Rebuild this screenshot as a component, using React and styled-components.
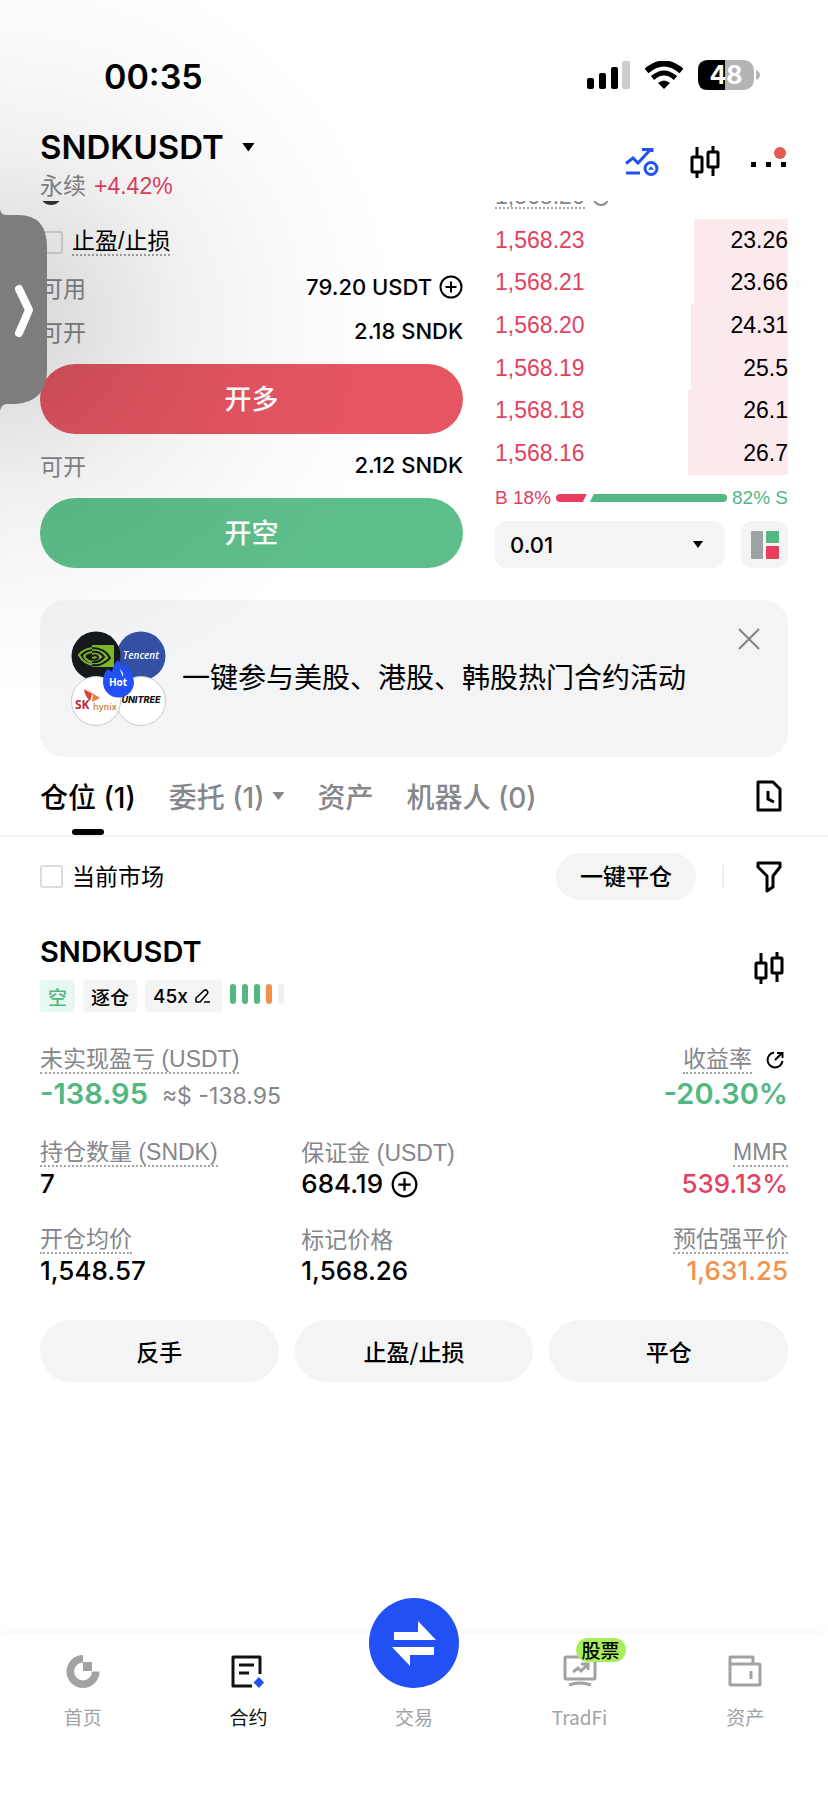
import { useState } from "react";
import styled, { createGlobalStyle } from "styled-components";

const asks = [
    { price: "1,568.23", size: "23.26", depth: 32 },
    { price: "1,568.21", size: "23.66", depth: 32 },
    { price: "1,568.20", size: "24.31", depth: 33 },
    { price: "1,568.19", size: "25.5", depth: 33 },
    { price: "1,568.18", size: "26.1", depth: 34 },
    { price: "1,568.16", size: "26.7", depth: 34 },
];

const riskBars = ["#52b781", "#52b781", "#52b781", "#f0924c", "#f0f0f0"];

export default function App() {
    const [tpsl, setTpsl] = useState(false);
    const [onlyCurrent, setOnlyCurrent] = useState(false);
    const [banner, setBanner] = useState(true);

    return (
        <>
            <GlobalStyle />
            <Page>
                <StatusBar>
                    <Clock>00:35</Clock>
                    <StatusIcons>
                        <SignalIcon />
                        <WifiIcon />
                        <BatteryIcon />
                    </StatusIcons>
                </StatusBar>

                <Header>
                    <div>
                        <PairButton>
                            SNDKUSDT <Caret $size={13} />
                        </PairButton>
                        <PairInfo>
                            永续 <Change>+4.42%</Change>
                        </PairInfo>
                    </div>
                    <HeaderIcons>
                        <IconButton aria-label="网格"><TrendIcon /></IconButton>
                        <IconButton aria-label="K线"><CandleIcon /></IconButton>
                        <IconButton aria-label="更多"><MoreIcon /></IconButton>
                    </HeaderIcons>
                </Header>

                <TradePanel>
                    <OrderForm>
                        <CutRow>
                            <Thumb />
                        </CutRow>
                        <CheckLabel>
                            <Checkbox type="checkbox" checked={tpsl} onChange={() => setTpsl(!tpsl)} />
                            <Dotted>止盈/止损</Dotted>
                        </CheckLabel>
                        <FormRow>
                            <span>可用</span>
                            <Amount>79.20 USDT <PlusIcon size={24} /></Amount>
                        </FormRow>
                        <FormRow>
                            <span>可开</span>
                            <Amount>2.18 SNDK</Amount>
                        </FormRow>
                        <TradeButton $color="#e65562">开多</TradeButton>
                        <FormRow>
                            <span>可开</span>
                            <Amount>2.12 SNDK</Amount>
                        </FormRow>
                        <TradeButton $color="#5ebe8b">开空</TradeButton>
                    </OrderForm>

                    <OrderBook>
                        <CutRow>
                            <MarkPrice>1,568.26</MarkPrice>
                            <Ring />
                        </CutRow>
                        <BookTable>
                            <tbody>
                                {asks.map(ask => (
                                    <BookRow key={ask.price} $depth={ask.depth}>
                                        <PriceCell>{ask.price}</PriceCell>
                                        <SizeCell>{ask.size}</SizeCell>
                                    </BookRow>
                                ))}
                            </tbody>
                        </BookTable>
                        <Ratio>
                            <RatioText $color="#e4405f">B 18%</RatioText>
                            <RatioBars>
                                <BuyBar />
                                <SellBar />
                            </RatioBars>
                            <RatioText $color="#52b781">82% S</RatioText>
                        </Ratio>
                        <BookControls>
                            <SelectBox>
                                <StepSelect aria-label="精度" defaultValue="0.01">
                                    <option>0.01</option>
                                    <option>0.1</option>
                                </StepSelect>
                                <Caret $size={10} />
                            </SelectBox>
                            <LayoutButton aria-label="布局"><LayoutIcon /></LayoutButton>
                        </BookControls>
                    </OrderBook>
                </TradePanel>

                {banner && (
                    <Banner>
                        <BrandLogos />
                        <BannerText>一键参与美股、港股、韩股热门合约活动</BannerText>
                        <CloseButton aria-label="关闭" onClick={() => setBanner(false)}>
                            <svg width="22" height="22" viewBox="0 0 22 22" stroke="#808285" strokeWidth="2">
                                <path d="M1 1l20 20M21 1L1 21" />
                            </svg>
                        </CloseButton>
                    </Banner>
                )}

                <Tabs>
                    <Tab $active>仓位 (1)</Tab>
                    <Tab>委托 (1) <Caret $size={12} /></Tab>
                    <Tab>资产</Tab>
                    <Tab>机器人 (0)</Tab>
                    <HistoryButton aria-label="历史"><HistoryIcon /></HistoryButton>
                </Tabs>

                <FilterRow>
                    <CheckLabel>
                        <Checkbox type="checkbox" checked={onlyCurrent} onChange={() => setOnlyCurrent(!onlyCurrent)} />
                        <span>当前市场</span>
                    </CheckLabel>
                    <FilterActions>
                        <ClosePill>一键平仓</ClosePill>
                        <Divider />
                        <IconButton aria-label="筛选"><FunnelIcon /></IconButton>
                    </FilterActions>
                </FilterRow>

                <Position>
                    <PositionHead>
                        <div>
                            <PositionTitle>SNDKUSDT</PositionTitle>
                            <Tags>
                                <Tag $side>空</Tag>
                                <Tag>逐仓</Tag>
                                <Tag>45x <PencilIcon /></Tag>
                                <RiskMeter>
                                    {riskBars.map((color, i) => <RiskBar key={i} $color={color} />)}
                                </RiskMeter>
                            </Tags>
                        </div>
                        <IconButton aria-label="K线"><CandleIcon /></IconButton>
                    </PositionHead>

                    <Stats>
                        <Stat $wide>
                            <StatLabel><Dotted>未实现盈亏 (USDT)</Dotted></StatLabel>
                            <StatValue $big $color="#52b781">-138.95 <Approx>≈$ -138.95</Approx></StatValue>
                        </Stat>
                        <Stat $right>
                            <StatLabel><Dotted>收益率</Dotted><ShareIcon /></StatLabel>
                            <StatValue $big $color="#52b781">-20.30%</StatValue>
                        </Stat>
                        <Stat>
                            <StatLabel><Dotted>持仓数量 (SNDK)</Dotted></StatLabel>
                            <StatValue>7</StatValue>
                        </Stat>
                        <Stat>
                            <StatLabel>保证金 (USDT)</StatLabel>
                            <StatValue>684.19 <PlusIcon size={27} /></StatValue>
                        </Stat>
                        <Stat $right>
                            <StatLabel><Dotted>MMR</Dotted></StatLabel>
                            <StatValue $color="#e4405f">539.13%</StatValue>
                        </Stat>
                        <Stat>
                            <StatLabel><Dotted>开仓均价</Dotted></StatLabel>
                            <StatValue>1,548.57</StatValue>
                        </Stat>
                        <Stat>
                            <StatLabel>标记价格</StatLabel>
                            <StatValue>1,568.26</StatValue>
                        </Stat>
                        <Stat $right>
                            <StatLabel><Dotted>预估强平价</Dotted></StatLabel>
                            <StatValue $color="#f0924c">1,631.25</StatValue>
                        </Stat>
                    </Stats>

                    <Actions>
                        <ActionButton>反手</ActionButton>
                        <ActionButton>止盈/止损</ActionButton>
                        <ActionButton>平仓</ActionButton>
                    </Actions>
                </Position>

                <BottomNav>
                    <NavItem href="#home"><HomeIcon />首页</NavItem>
                    <NavItem href="#futures" $active><FuturesIcon />合约</NavItem>
                    <NavItem href="#trade"><TradeCircle><SwapIcon /></TradeCircle>交易</NavItem>
                    <NavItem href="#tradfi">
                        <BadgeWrap><TradFiIcon /><Badge>股票</Badge></BadgeWrap>
                        TradFi
                    </NavItem>
                    <NavItem href="#assets"><WalletIcon />资产</NavItem>
                </BottomNav>

                <EdgeShade />
                <EdgeHandle aria-label="展开">
                    <svg width="48" height="202" viewBox="0 0 48 202">
                        <path d="M0 0Q1 6 6 6H18Q47 6 47 38V162Q47 192 16 195H6Q1 196 0 202Z" fill="#7f7c7d" />
                        <path d="M19 80L29 101L19 124" fill="none" stroke="#fff" strokeWidth="8" strokeLinecap="round" strokeLinejoin="round" />
                    </svg>
                </EdgeHandle>
            </Page>
        </>
    );
}

function SignalIcon() {
    return (
        <svg width="43" height="28" viewBox="0 0 43 28">
            <rect x="0" y="17" width="7" height="11" rx="2" />
            <rect x="12" y="12" width="7" height="16" rx="2" />
            <rect x="24" y="6" width="7" height="22" rx="2" />
            <rect x="35" y="0" width="8" height="28" rx="2" fill="#ccc" />
        </svg>
    );
}

function WifiIcon() {
    return (
        <svg width="38" height="28" viewBox="0 0 38 28">
            <path d="M1.500 10Q19 -5 36.500 10" fill="none" stroke="#000" strokeWidth="6" />
            <path d="M7.500 17Q19 7 30.500 17" fill="none" stroke="#000" strokeWidth="5" />
            <path d="M13 22Q19 17 25 22L19 28Z" />
        </svg>
    );
}

function BatteryIcon() {
    return (
        <svg width="62" height="30" viewBox="0 0 62 30">
            <rect width="56" height="30" rx="10" fill="#b4b4b4" />
            <path d="M10 0H27V30H10Q0 30 0 20V10Q0 0 10 0Z" />
            <path d="M58 10Q62 12 62 15T58 20Z" fill="#b4b4b4" />
            <text x="28" y="24" textAnchor="middle" fill="#fff" fontFamily="Inter" fontWeight="700" fontSize="25">48</text>
        </svg>
    );
}

function TrendIcon() {
    return (
        <svg width="34" height="30" viewBox="0 0 34 30" fill="none" stroke="#2151f5" strokeWidth="3">
            <path d="M1 16.500L8 11L13 16L25 3" />
            <path d="M17 2.500H27V5" />
            <path d="M1 26H15" />
            <circle cx="26" cy="21.500" r="6" />
            <path d="M26 19.500l2.500 3h-5z" fill="#2151f5" strokeWidth="0.500" />
        </svg>
    );
}

function CandleIcon() {
    return (
        <svg width="30" height="34" viewBox="0 0 30 34" fill="none" stroke="#000" strokeWidth="3">
            <path d="M7 2V12M7 28V33M23 1V7M23 22V31" />
            <rect x="2" y="12" width="10" height="15" rx="1" />
            <rect x="18" y="7" width="10" height="15" rx="1" />
        </svg>
    );
}

function MoreIcon() {
    return (
        <svg width="37" height="30" viewBox="0 0 37 30">
            <path d="M0 15h5v5h-5zM15 15h5v5h-5zM30 15h5v5h-5z" />
            <circle cx="29" cy="6" r="6" fill="#e25a50" />
        </svg>
    );
}

function PlusIcon({ size }) {
    return (
        <svg width={size} height={size} viewBox="0 0 24 24" fill="none" stroke="#000" strokeWidth="2">
            <circle cx="12" cy="12" r="10.500" />
            <path d="M12 6.500v11M6.500 12h11" />
        </svg>
    );
}

function LayoutIcon() {
    return (
        <svg width="28" height="28" viewBox="0 0 28 28">
            <rect width="12" height="28" rx="1" fill="#9da2a5" />
            <rect x="15" width="13" height="12" rx="1" fill="#52b781" />
            <rect x="15" y="15" width="13" height="13" rx="1" fill="#ea3d5e" />
        </svg>
    );
}

function BrandLogos() {
    return (
        <svg width="95" height="95" viewBox="0 0 95 95">
            <circle cx="70" cy="25" r="24.500" fill="#3450a5" />
            <text x="70" y="28" textAnchor="middle" fill="#fff" fontFamily="Open Sans" fontStyle="italic" fontWeight="600" fontSize="10">Tencent</text>
            <circle cx="70" cy="70" r="24.500" fill="#fff" stroke="#c9c9cd" />
            <text x="70" y="72" textAnchor="middle" fill="#111" fontFamily="Inter" fontStyle="italic" fontWeight="800" fontSize="9">UNITREE</text>
            <circle cx="25" cy="25" r="24.500" fill="#15181c" />
            <path d="M21 14h22v22H21z" fill="#7db928" />
            <path d="M21 17Q11 19 8 24Q13 34 25 34" fill="none" stroke="#7db928" strokeWidth="2" />
            <path d="M21 17Q34 17 39 27Q30 36 21 34" fill="none" stroke="#15181c" strokeWidth="2" />
            <path d="M21 21Q15 22 13 25Q16 31 22 31" fill="none" stroke="#7db928" strokeWidth="2" />
            <path d="M21 21Q29 20 33 26Q28 32 21 31M21 25Q27 23 27 27Q24 30 21 28" fill="none" stroke="#15181c" strokeWidth="2" />
            <circle cx="25" cy="70" r="24.500" fill="#fff" stroke="#c9c9cd" />
            <path d="M13 58L21 63L19 70Q14 66 13 58Z" fill="#d8452f" />
            <path d="M15 58L29 67L21 71L22 64Z" fill="#ee7b3c" />
            <text x="4" y="78" fill="#c5243c" fontFamily="Open Sans" fontWeight="700" fontSize="12">SK</text>
            <text x="22" y="79" fill="#c98534" fontFamily="Open Sans" fontWeight="600" fontSize="9">hynix</text>
            <path d="M47 29Q51 33 51 38Q54 35 55 32Q62 42 63 51A15.500 15.500 0 0 1 32 51Q32 42 37 38L41 41Q42 34 47 29Z" fill="#2151f5" />
            <path d="M49 38Q53 42 52 46Q50 42 49 38Z" fill="#fff" />
            <text x="47" y="55" textAnchor="middle" fill="#fff" fontFamily="Open Sans" fontWeight="700" fontSize="10">Hot</text>
        </svg>
    );
}

function HistoryIcon() {
    return (
        <svg width="26" height="32" viewBox="0 0 26 32" fill="none" stroke="#000" strokeWidth="3">
            <path d="M2 2H17L24 9V30H2Z" strokeLinejoin="round" />
            <path d="M12 11V19L18 22" />
        </svg>
    );
}

function FunnelIcon() {
    return (
        <svg width="26" height="32" viewBox="0 0 26 32" fill="none" stroke="#000" strokeWidth="3" strokeLinejoin="round">
            <path d="M2 2H24V6L17 15V26L11 30V15L2 6Z" />
        </svg>
    );
}

function PencilIcon() {
    return (
        <svg width="16" height="16" viewBox="0 0 16 16" fill="none" stroke="#000" strokeWidth="1.500" strokeLinejoin="round">
            <path d="M1 14V10L9 2.500Q10.500 1.200 12 2.500Q13.500 4 12.500 5.500L5 14Z" />
            <path d="M9 14H15" />
        </svg>
    );
}

function ShareIcon() {
    return (
        <svg width="18" height="18" viewBox="0 0 18 18" fill="none" stroke="#000" strokeWidth="2">
            <path d="M8 1.500A7.500 7.500 0 1 0 16.500 10" />
            <path d="M9 9L16 2M11 2H16.500V7" />
        </svg>
    );
}

function HomeIcon() {
    return (
        <svg width="34" height="34" viewBox="0 0 34 34" fill="#a0a2a4">
            <path d="M17 1A16.500 16.500 0 1 0 33.500 17.500H26A9 9 0 1 1 17 8.500Z" />
            <rect x="17" y="8" width="9" height="9" />
        </svg>
    );
}

function FuturesIcon() {
    return (
        <svg width="34" height="34" viewBox="0 0 34 34" fill="none" stroke="#111" strokeWidth="3">
            <path d="M29 20V3H2V32H21" strokeLinejoin="round" />
            <path d="M8 11H23M8 19H18" />
            <path d="M28 23L33 28.500L28 34L22.500 28.500Z" fill="#2151f5" stroke="none" />
        </svg>
    );
}

function SwapIcon() {
    return (
        <svg width="46" height="46" viewBox="0 0 46 46" fill="#fff">
            <path d="M3 12H27V1L45 20H3Z" />
            <path d="M43 35V27H1L19 46V35Z" />
        </svg>
    );
}

function TradFiIcon() {
    return (
        <svg width="34" height="34" viewBox="0 0 34 34" fill="none" stroke="#a0a2a4" strokeWidth="3">
            <rect x="2" y="3" width="30" height="22" rx="1" />
            <path d="M10 18L15 14L18 17L24 11M18 10H25V16" />
            <path d="M6 31Q17 27 28 31" />
        </svg>
    );
}

function WalletIcon() {
    return (
        <svg width="34" height="34" viewBox="0 0 34 34" fill="none" stroke="#a0a2a4" strokeWidth="3">
            <path d="M2 10V3H25V9" strokeLinejoin="round" />
            <rect x="2" y="10" width="30" height="21" rx="1" />
            <path d="M23 17V25" />
        </svg>
    );
}

const GlobalStyle = createGlobalStyle`
    * {
        box-sizing: border-box;
    }
    body {
        margin: 0;
        background: #fff;
        color: #000;
        font-family: "Liberation Sans", "Noto Sans CJK SC", sans-serif;
    }
    button, select {
        border: 0;
        padding: 0;
        background: none;
        color: inherit;
        font: inherit;
        cursor: pointer;
    }
    svg {
        display: block;
        flex-shrink: 0;
    }
`
const Page = styled.main`
    position: relative;
    min-height: 100vh;
    display: flex;
    flex-direction: column;
    overflow: hidden;
`
const StatusBar = styled.div`
    display: flex;
    justify-content: space-between;
    padding: 56px 68px 29px 104px;
`
const Clock = styled.div`
    font-family: Inter, sans-serif;
    font-weight: 600;
    font-size: 34px;
    line-height: 42px;
`
const StatusIcons = styled.div`
    display: flex;
    align-items: center;
    gap: 15px;
    height: 38px;
`
const Header = styled.header`
    display: flex;
    justify-content: space-between;
    align-items: center;
    padding: 0 40px;
`
const PairButton = styled.button`
    display: flex;
    align-items: center;
    gap: 18px;
    font-family: Inter, sans-serif;
    font-weight: 600;
    font-size: 33px;
    line-height: 40px;
`
const Caret = styled.span`
    width: ${props => props.$size}px;
    height: ${props => Math.round(props.$size * 0.7)}px;
    background: currentColor;
    clip-path: polygon(0 0, 100% 0, 50% 100%);
    flex-shrink: 0;
    pointer-events: none;
`
const PairInfo = styled.div`
    display: flex;
    gap: 8px;
    padding-top: 4px;
    font-size: 23px;
    line-height: 30px;
    color: #85878a;
`
const Change = styled.span`
    font-size: 23px;
    color: #e4405f;
`
const HeaderIcons = styled.div`
    display: flex;
    align-items: center;
    gap: 31px;
    padding-bottom: 4px;
`
const IconButton = styled.button`
    display: flex;
    align-items: center;
    justify-content: center;
`
const TradePanel = styled.section`
    display: grid;
    grid-template-columns: 13fr 9fr;
    gap: 32px;
    padding: 0 40px;
`
const OrderForm = styled.div`
    display: flex;
    flex-direction: column;
`
const CutRow = styled.div`
    display: flex;
    align-items: flex-end;
    gap: 8px;
    height: 8px;
    margin-bottom: 10px;
    overflow: hidden;
`
const Thumb = styled.span`
    width: 22px;
    height: 22px;
    margin-bottom: 4px;
    border-radius: 50%;
    background: #333;
`
const CheckLabel = styled.label`
    display: flex;
    align-items: center;
    gap: 9px;
    height: 46px;
    font-size: 23px;
    line-height: 26px;
`
const Checkbox = styled.input`
    appearance: none;
    width: 23px;
    height: 23px;
    margin: 0;
    border: 2px solid #dcdcdc;
    border-radius: 3px;
    &:checked {
        background: #000;
    }
`
const Dotted = styled.span`
    border-bottom: 2px dotted #a5a5a5;
`
const FormRow = styled.div`
    display: flex;
    justify-content: space-between;
    align-items: center;
    height: 44px;
    font-size: 23px;
    color: #85878a;
`
const Amount = styled.span`
    display: flex;
    align-items: center;
    gap: 7px;
    font-family: Inter, sans-serif;
    font-weight: 500;
    font-size: 22px;
    color: #000;
`
const TradeButton = styled.button`
    height: 70px;
    margin: 11px 0 9px;
    padding-bottom: 3px;
    border-radius: 35px;
    background: ${props => props.$color};
    color: #fff;
    font-weight: 500;
    font-size: 27px;
    &:last-child {
        margin-bottom: 0;
    }
`
const OrderBook = styled.div`
    display: flex;
    flex-direction: column;
`
const MarkPrice = styled.span`
    border-bottom: 2px dotted #a5a5a5;
    font-size: 23px;
    line-height: 22px;
    color: #85878a;
`
const Ring = styled.span`
    width: 16px;
    height: 16px;
    margin-bottom: 3px;
    border: 2px solid #85878a;
    border-radius: 50%;
`
const BookTable = styled.table`
    width: 100%;
    height: 256px;
    border-collapse: collapse;
    font-size: 23px;
`
const BookRow = styled.tr`
    background: linear-gradient(to left, #fbe9ec ${props => props.$depth}%, transparent ${props => props.$depth}%);
`
const PriceCell = styled.td`
    padding: 0;
    color: #e4405f;
`
const SizeCell = styled.td`
    padding: 0;
    text-align: right;
`
const Ratio = styled.div`
    display: flex;
    align-items: center;
    gap: 5px;
    height: 46px;
`
const RatioText = styled.span`
    font-size: 19px;
    white-space: nowrap;
    color: ${props => props.$color};
`
const RatioBars = styled.div`
    flex: 1;
    display: flex;
    height: 8px;
`
const BuyBar = styled.span`
    flex: 18;
    border-radius: 4px 0 0 4px;
    background: #ea3d5e;
    clip-path: polygon(0 0, 100% 0, calc(100% - 4px) 100%, 0 100%);
`
const SellBar = styled.span`
    flex: 82;
    border-radius: 0 4px 4px 0;
    background: #52b781;
    clip-path: polygon(7px 0, 100% 0, 100% 100%, 3px 100%);
`
const BookControls = styled.div`
    display: flex;
    gap: 16px;
`
const SelectBox = styled.div`
    flex: 1;
    display: flex;
    align-items: center;
    padding-right: 22px;
    border-radius: 12px;
    background: #f4f4f4;
`
const StepSelect = styled.select`
    flex: 1;
    min-width: 0;
    height: 47px;
    padding: 0 15px;
    appearance: none;
    font-family: Inter, sans-serif;
    font-weight: 500;
    font-size: 22px;
`
const LayoutButton = styled.button`
    display: flex;
    align-items: center;
    justify-content: center;
    width: 47px;
    height: 47px;
    border-radius: 12px;
    background: #f4f4f4;
`
const Banner = styled.section`
    display: flex;
    align-items: center;
    gap: 16px;
    min-height: 157px;
    margin: 32px 40px 0;
    padding: 0 28px 0 31px;
    border-radius: 24px;
    background: linear-gradient(to right, #f2f4f6, #f4f4f5 50%);
`
const BannerText = styled.p`
    flex: 1;
    margin: 0;
    font-size: 28px;
    line-height: 36px;
`
const CloseButton = styled.button`
    align-self: flex-start;
    margin-top: 28px;
`
const Tabs = styled.nav`
    display: flex;
    align-items: center;
    gap: 33px;
    height: 80px;
    padding: 0 46px 0 40px;
    border-bottom: 2px solid #f4f4f4;
`
const Tab = styled.button`
    position: relative;
    display: flex;
    align-items: center;
    gap: 8px;
    height: 78px;
    font-family: Inter, "Noto Sans CJK SC", sans-serif;
    font-weight: 500;
    font-size: 28px;
    white-space: nowrap;
    color: ${props => props.$active ? "#000" : "#85878a"};
    &::after {
        content: "";
        display: ${props => props.$active ? "block" : "none"};
        position: absolute;
        left: calc(50% - 16px);
        bottom: 0;
        width: 32px;
        height: 6px;
        border-radius: 3px;
        background: #000;
    }
`
const HistoryButton = styled(IconButton)`
    margin-left: auto;
`
const FilterRow = styled.div`
    display: flex;
    justify-content: space-between;
    align-items: center;
    padding: 16px 46px 0 40px;
`
const FilterActions = styled.div`
    display: flex;
    align-items: center;
    gap: 26px;
`
const ClosePill = styled.button`
    height: 47px;
    padding: 0 24px 3px;
    border-radius: 24px;
    background: #f4f4f4;
    font-weight: 500;
    font-size: 23px;
`
const Divider = styled.span`
    width: 2px;
    height: 24px;
    margin-right: 6px;
    background: #eee;
`
const Position = styled.section`
    padding: 32px 40px;
`
const PositionHead = styled.div`
    display: flex;
    justify-content: space-between;
    align-items: center;
    padding-right: 4px;
    ${IconButton} {
        padding-bottom: 8px;
    }
`
const PositionTitle = styled.h2`
    margin: 0 0 8px;
    font-family: Inter, sans-serif;
    font-weight: 600;
    font-size: 29px;
    line-height: 40px;
`
const Tags = styled.div`
    display: flex;
    align-items: center;
    gap: 8px;
`
const Tag = styled.span`
    display: flex;
    align-items: center;
    gap: 7px;
    height: 32px;
    padding: 0 8px;
    border-radius: 4px;
    font-family: Inter, "Noto Sans CJK SC", sans-serif;
    font-weight: 500;
    font-size: 19px;
    background: ${props => props.$side ? "#e6f8ef" : "#f4f4f4"};
    color: ${props => props.$side ? "#52b781" : "#000"};
    &:nth-child(3) {
        padding-right: 11px;
    }
`
const RiskMeter = styled.div`
    display: flex;
    gap: 6px;
    padding-bottom: 4px;
`
const RiskBar = styled.span`
    width: 6px;
    height: 20px;
    border-radius: 3px;
    background: ${props => props.$color};
`
const Stats = styled.dl`
    display: grid;
    grid-template-columns: 1fr 1fr 1fr;
    gap: 27px 36px;
    margin: 34px 0;
`
const Stat = styled.div`
    display: flex;
    flex-direction: column;
    gap: 2px;
    align-items: ${props => props.$right ? "flex-end" : "flex-start"};
    grid-column: ${props => props.$wide ? "span 2" : "auto"};
`
const StatLabel = styled.dt`
    display: flex;
    align-items: center;
    gap: 14px;
    height: 28px;
    font-size: 23px;
    line-height: 26px;
    color: #85878a;
    white-space: nowrap;
    svg {
        margin-right: 4px;
    }
`
const StatValue = styled.dd`
    display: flex;
    align-items: center;
    gap: 8px;
    margin: 0;
    font-family: Inter, sans-serif;
    font-weight: ${props => props.$big ? 600 : 500};
    font-size: ${props => props.$big ? 29 : 26}px;
    line-height: ${props => props.$big ? 36 : 30}px;
    color: ${props => props.$color || "#000"};
`
const Approx = styled.span`
    padding: 4px 0 0 6px;
    font-weight: 400;
    font-size: 23px;
    line-height: 30px;
    color: #85878a;
`
const Actions = styled.div`
    display: grid;
    grid-template-columns: 1fr 1fr 1fr;
    gap: 16px;
`
const ActionButton = styled.button`
    height: 62px;
    border-radius: 31px;
    background: #f4f4f4;
    font-family: "Noto Sans CJK SC", sans-serif;
    font-weight: 500;
    font-size: 23px;
`
const BottomNav = styled.nav`
    display: grid;
    grid-template-columns: repeat(5, 1fr);
    margin-top: auto;
    padding: 20px 0 69px;
    background: #fff;
    box-shadow: 0 -4px 14px rgba(0, 0, 0, 0.03);
`
const NavItem = styled.a`
    display: flex;
    flex-direction: column;
    align-items: center;
    gap: 17px;
    font-size: 19px;
    line-height: 24px;
    text-decoration: none;
    font-family: "Noto Sans CJK SC", sans-serif;
    color: ${props => props.$active ? "#111" : "#a0a2a4"};
`
const TradeCircle = styled.span`
    display: flex;
    align-items: center;
    justify-content: center;
    width: 90px;
    height: 90px;
    margin-top: -56px;
    border-radius: 50%;
    background: #2151f5;
`
const BadgeWrap = styled.span`
    position: relative;
`
const Badge = styled.span`
    position: absolute;
    left: 13px;
    top: -16px;
    padding: 0 6px;
    border-radius: 12px;
    background: #a8ee5c;
    color: #000;
    font-weight: 500;
    font-size: 19px;
    line-height: 24px;
    white-space: nowrap;
`
const EdgeShade = styled.div`
    position: absolute;
    left: 0;
    top: 0;
    width: 420px;
    height: 760px;
    pointer-events: none;
    background: radial-gradient(ellipse 400px 380px at 0 320px, rgba(0, 0, 0, 0.16), rgba(0, 0, 0, 0.12) 20%, rgba(0, 0, 0, 0.06) 45%, rgba(0, 0, 0, 0.02) 75%, transparent);
`
const EdgeHandle = styled.button`
    position: absolute;
    left: 0;
    top: 209px;
`
